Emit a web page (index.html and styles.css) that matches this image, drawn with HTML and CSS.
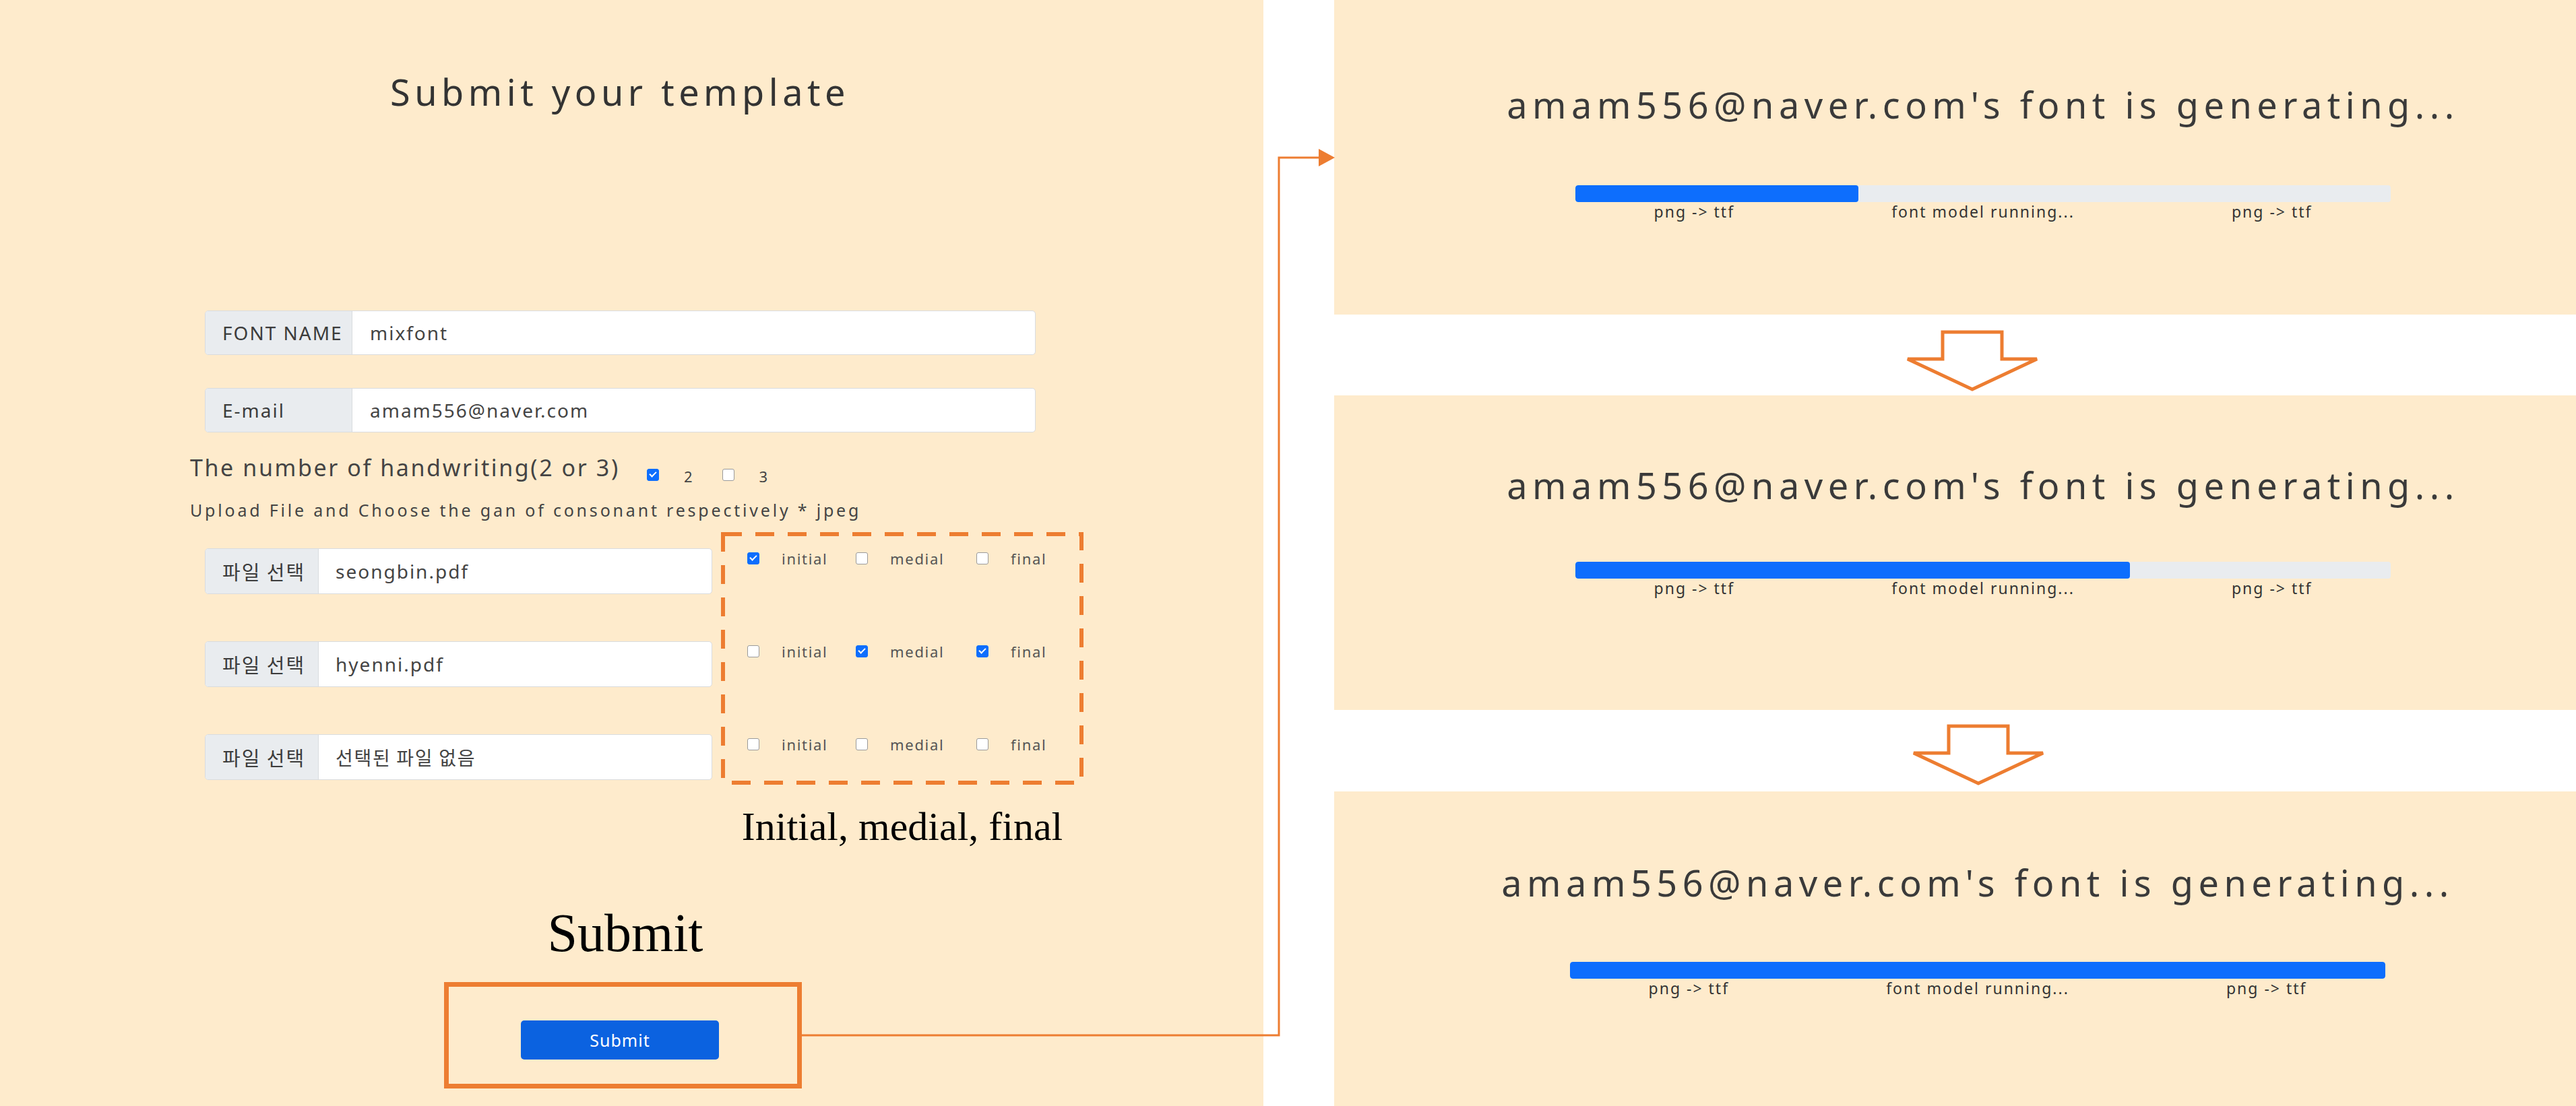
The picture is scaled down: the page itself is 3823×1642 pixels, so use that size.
FILE: index.html
```html
<!DOCTYPE html>
<html lang="en">
<head>
<meta charset="utf-8">
<title>Submit your template</title>
<link rel="stylesheet" href="styles.css">
</head>
<body>
<div class="page">
  <section class="form-panel">
    <div class="form">
      <h1 class="title">Submit your template</h1>
      <div class="group group--name"><span class="group-label">FONT NAME</span><span class="group-input">mixfont</span></div>
      <div class="group group--mail"><span class="group-label">E-mail</span><span class="group-input">amam556@naver.com</span></div>
      <div class="count-line">
        <span class="count-text">The number of handwriting(2 or 3)</span>
        <span class="count-opts">
          <span class="cb cb--on"></span><span class="opt-num opt-num--first">2</span>
          <span class="cb cb--second"></span><span class="opt-num opt-num--second">3</span>
        </span>
      </div>
      <p class="upload-note">Upload File and Choose the gan of consonant respectively * jpeg</p>
      <div class="upload">
        <div class="files">
          <div class="file"><span class="file-label">파일 선택</span><span class="file-name">seongbin.pdf</span></div>
          <div class="file"><span class="file-label">파일 선택</span><span class="file-name">hyenni.pdf</span></div>
          <div class="file"><span class="file-label">파일 선택</span><span class="file-name file-name--ko">선택된 파일 없음</span></div>
        </div>
        <div class="parts">
          <div class="parts-box">
            <svg class="dash" viewBox="0 0 538 375" aria-hidden="true"><rect x="3" y="3" width="532" height="369" fill="none" stroke="#ED7D31" stroke-width="6" stroke-dasharray="28 20"/></svg>
            <div class="parts-row">
              <span class="part"><span class="cb cb--on"></span>initial</span>
              <span class="part"><span class="cb"></span>medial</span>
              <span class="part"><span class="cb"></span>final</span>
            </div>
            <div class="parts-row">
              <span class="part"><span class="cb"></span>initial</span>
              <span class="part"><span class="cb cb--on"></span>medial</span>
              <span class="part"><span class="cb cb--on"></span>final</span>
            </div>
            <div class="parts-row">
              <span class="part"><span class="cb"></span>initial</span>
              <span class="part"><span class="cb"></span>medial</span>
              <span class="part"><span class="cb"></span>final</span>
            </div>
          </div>
          <p class="caption">Initial, medial, final</p>
        </div>
      </div>
      <p class="submit-caption">Submit</p>
      <div class="submit-frame"><button class="submit-btn" type="button">Submit</button></div>
    </div>
  </section>

  <div class="status-col">
    <div class="status status--1">
      <p class="status-title">amam556@naver.com's font is generating...</p>
      <div class="bar"><div class="bar-fill" style="width:34.7%"></div></div>
      <div class="bar-steps"><span>png -&gt; ttf</span><span>font model running...</span><span>png -&gt; ttf</span></div>
    </div>
    <div class="arrow-row arrow-row--1">
      <svg class="arrow" viewBox="0 0 200 92" aria-hidden="true"><polygon points="56,3 144,3 144,43 196,43 100,88 4,43 56,43" fill="none" stroke="#ED7D31" stroke-width="5"/></svg>
    </div>
    <div class="status status--2">
      <p class="status-title">amam556@naver.com's font is generating...</p>
      <div class="bar"><div class="bar-fill" style="width:68%"></div></div>
      <div class="bar-steps"><span>png -&gt; ttf</span><span>font model running...</span><span>png -&gt; ttf</span></div>
    </div>
    <div class="arrow-row arrow-row--2">
      <svg class="arrow" viewBox="0 0 200 92" aria-hidden="true"><polygon points="56,3 144,3 144,43 196,43 100,88 4,43 56,43" fill="none" stroke="#ED7D31" stroke-width="5"/></svg>
    </div>
    <div class="status status--3">
      <p class="status-title">amam556@naver.com's font is generating...</p>
      <div class="bar"><div class="bar-fill" style="width:100%"></div></div>
      <div class="bar-steps"><span>png -&gt; ttf</span><span>font model running...</span><span>png -&gt; ttf</span></div>
    </div>
  </div>

  <svg class="connector" viewBox="0 0 3823 1642" aria-hidden="true">
    <polyline points="1190,1537 1898,1537 1898,234 1962,234" fill="none" stroke="#ED7D31" stroke-width="3"/>
    <polygon points="1957,221 1981,234 1957,247" fill="#ED7D31"/>
  </svg>
</div>
</body>
</html>
```
FILE: styles.css
```css
body {
  margin: 0;
  background: #ffffff;
  font-family: "Noto Sans", "Noto Sans CJK KR", sans-serif;
  color: #363636;
}

.page {
  position: relative;
  display: flex;
  gap: 105px;
  width: 3823px;
  height: 1642px;
  overflow: hidden;
}

/* ---------- left: form ---------- */
.form-panel {
  flex: 0 0 1875px;
  box-sizing: border-box;
  background: #feebcc;
  padding: 106px 0 0 282px;
}

.form {
  width: 1276px;
  display: flex;
  flex-direction: column;
}

.title {
  margin: 0;
  font-weight: 400;
  font-size: 54px;
  line-height: 60px;
  letter-spacing: 6.5px;
  text-align: center;
  color: #333333;
}

.group,
.file {
  display: flex;
  flex: none;
  box-sizing: border-box;
  border: 1px solid #d9dcdf;
  border-radius: 5px;
  overflow: hidden;
  background: #ffffff;
  font-size: 28px;
  letter-spacing: 2px;
  color: #3c3c3c;
}

.group {
  width: 1233px;
  height: 66px;
  margin-left: 22px;
}

.group--name { margin-top: 295px; }
.group--mail { margin-top: 49px; }

.group-label,
.file-label {
  flex: none;
  display: flex;
  align-items: center;
  box-sizing: border-box;
  padding-left: 25px;
  background: #e9ecef;
  border-right: 1px solid #d9dcdf;
}

.group-label { width: 218px; }

.group-input,
.file-name {
  display: flex;
  align-items: center;
  padding-left: 26px;
  color: #444444;
}

.count-line {
  margin-top: 30px;
  height: 44px;
  display: flex;
  align-items: flex-start;
}

.count-text {
  flex: none;
  width: 678px;
  white-space: nowrap;
  font-size: 34px;
  line-height: 44px;
  letter-spacing: 2.6px;
  color: #444444;
}

.count-opts {
  display: flex;
  align-items: flex-start;
  margin-top: 24px;
}

.opt-num {
  font-size: 22px;
  line-height: 22px;
  color: #444444;
}

.opt-num--first { margin-left: 37px; }
.cb--second { margin-left: 44px; }
.opt-num--second { margin-left: 37px; }

.cb {
  position: relative;
  flex: none;
  width: 18px;
  height: 18px;
  box-sizing: border-box;
  border: 1.5px solid #9a9a9a;
  border-radius: 3px;
  background: #ffffff;
}

.cb--on {
  background: #0d6efd;
  border-color: #0d6efd;
}

.cb--on::after {
  content: "";
  position: absolute;
  left: 4.5px;
  top: 1px;
  width: 4px;
  height: 8px;
  border: solid #ffffff;
  border-width: 0 2px 2px 0;
  transform: rotate(45deg);
}

.upload-note {
  margin: 24px 0 0;
  font-size: 25px;
  line-height: 34px;
  letter-spacing: 3.8px;
  color: #444444;
  white-space: nowrap;
}

.upload {
  display: flex;
  margin-top: 16px;
}

.files {
  flex: none;
  width: 753px;
  margin-left: 22px;
  padding-top: 24px;
  display: flex;
  flex-direction: column;
  gap: 70px;
}

.file { height: 68px; }

.file-label {
  width: 168px;
  font-family: "Noto Sans CJK KR", sans-serif;
  font-size: 29px;
  letter-spacing: 2px;
}

.file-name { padding-left: 25px; }

.file-name--ko {
  font-family: "Noto Sans CJK KR", sans-serif;
  font-size: 28px;
  letter-spacing: 1.7px;
}

.parts {
  flex: none;
  width: 538px;
  margin-left: 13px;
}

.parts-box {
  position: relative;
  height: 375px;
  box-sizing: border-box;
  padding-top: 24px;
  display: flex;
  flex-direction: column;
  gap: 108px;
}

.dash {
  position: absolute;
  left: 0;
  top: 0;
  width: 538px;
  height: 375px;
}

.parts-row {
  display: grid;
  grid-template-columns: 161px 179px auto;
  align-items: center;
  height: 30px;
  padding-left: 39px;
}

.part {
  display: flex;
  align-items: center;
  gap: 33px;
  font-size: 22px;
  line-height: 30px;
  letter-spacing: 1.7px;
  color: #555555;
}

.caption {
  margin: 27px 0 0;
  text-align: center;
  font-family: "Liberation Serif", serif;
  font-size: 60px;
  line-height: 70px;
  color: #000000;
}

.submit-caption {
  margin: 78px 0 0;
  padding-left: 16px;
  text-align: center;
  font-family: "Liberation Serif", serif;
  font-size: 80px;
  line-height: 90px;
  color: #000000;
}

.submit-frame {
  flex: none;
  margin: 28px 0 0 377px;
  width: 531px;
  height: 158px;
  box-sizing: border-box;
  border: 7px solid #ed7d31;
  padding: 50px 0 0 107px;
}

.submit-btn {
  display: block;
  width: 294px;
  height: 58px;
  border: none;
  border-radius: 5px;
  background: #0b62e0;
  color: #ffffff;
  font-family: "Noto Sans", sans-serif;
  font-size: 25px;
  letter-spacing: 1px;
}

/* ---------- right: status panels ---------- */
.status-col {
  flex: 0 0 1843px;
  display: flex;
  flex-direction: column;
}

.status {
  flex: none;
  height: 467px;
  box-sizing: border-box;
  padding-left: 83px;
  background: #feebcc;
  display: flex;
  flex-direction: column;
  align-items: center;
}

.status--1 { padding-top: 123px; }
.status--1 .bar { margin-top: 88px; }
.status--2 { padding-top: 101px; }
.status--2 .bar { margin-top: 82px; }
.status--3 { padding-top: 103px; padding-left: 67px; }
.status--3 .bar { margin-top: 86px; }

.status-title {
  margin: 0;
  white-space: nowrap;
  font-size: 54px;
  line-height: 64px;
  letter-spacing: 7.5px;
  color: #3a3a3a;
}

.bar {
  width: 1210px;
  height: 25px;
  border-radius: 4px;
  background: #e9ecef;
  overflow: hidden;
}

.bar-fill {
  height: 100%;
  border-radius: 4px;
  background: #0d6efd;
}

.bar-steps {
  width: 1210px;
  display: flex;
  justify-content: space-around;
  font-size: 23px;
  line-height: 28px;
  letter-spacing: 2px;
  color: #333333;
}

.arrow-row {
  flex: none;
  box-sizing: border-box;
}

.arrow-row--1 { height: 120px; padding: 23px 0 0 847px; }
.arrow-row--2 { height: 121px; padding: 21px 0 0 856px; }

.arrow {
  display: block;
  width: 200px;
  height: 92px;
}

.connector {
  position: absolute;
  left: 0;
  top: 0;
  width: 3823px;
  height: 1642px;
  pointer-events: none;
}
```
